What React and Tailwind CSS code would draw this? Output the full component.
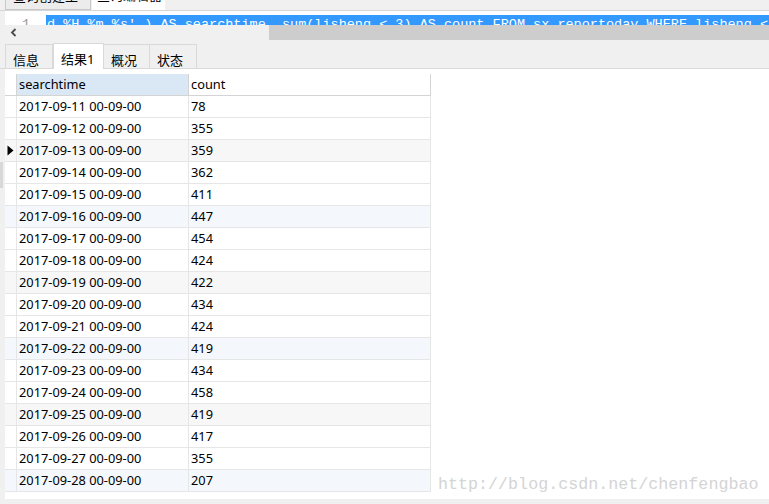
import React from "react";

const rows = [
  ["2017-09-11 00-09-00", "78"],
  ["2017-09-12 00-09-00", "355"],
  ["2017-09-13 00-09-00", "359"],
  ["2017-09-14 00-09-00", "362"],
  ["2017-09-15 00-09-00", "411"],
  ["2017-09-16 00-09-00", "447"],
  ["2017-09-17 00-09-00", "454"],
  ["2017-09-18 00-09-00", "424"],
  ["2017-09-19 00-09-00", "422"],
  ["2017-09-20 00-09-00", "434"],
  ["2017-09-21 00-09-00", "424"],
  ["2017-09-22 00-09-00", "419"],
  ["2017-09-23 00-09-00", "434"],
  ["2017-09-24 00-09-00", "458"],
  ["2017-09-25 00-09-00", "419"],
  ["2017-09-26 00-09-00", "417"],
  ["2017-09-27 00-09-00", "355"],
  ["2017-09-28 00-09-00", "207"],
];

const ui = "font-['Noto_Sans','Noto_Sans_CJK_SC',sans-serif]";

const rowBg = (i) => {
  if (i % 6 === 2) return "bg-[#f7f7f7]";
  if (i % 6 === 5) return "bg-[#f4f8fc]";
  return "bg-white";
};

const Tab = ({ label, active, w }) => (
  <div
    className={
      active
        ? `${w} h-[26px] -mt-[1px] -mb-[1px] bg-white border border-b-0 border-[#d9d9d9] pl-[7px] pt-[2px] relative z-10`
        : `${w} h-[24px] bg-[#f0f0f0] border border-l-0 border-b-0 border-[#d9d9d9] pl-[7px] pt-[2px] first:border-l`
    }
  >
    <span className="text-[13px] leading-[18px] text-black">{label}</span>
  </div>
);

export default function App() {
  return (
    <div className={`w-[769px] h-[504px] bg-[#f0f0f0] overflow-hidden relative flex flex-col ${ui}`}>
      {/* editor tabs (clipped) */}
      <div className="h-[11px] flex items-end border-b border-[#d6d6d6] overflow-hidden">
        <div className="ml-[5px] w-[86px] h-[14px] border border-[#c8c8c8] bg-[#ececec] overflow-hidden">
          <div className="-mt-[10px] pl-[7px] text-[13px] leading-[18px] text-black">查询创建工具</div>
        </div>
        <div className="ml-[1px] w-[73px] h-[14px] bg-white overflow-hidden">
          <div className="-mt-[10px] pl-[5px] text-[13px] leading-[18px] text-black">查询编辑器</div>
        </div>
      </div>

      {/* code line */}
      <div className="h-[14px] ml-[5px] bg-white flex overflow-hidden">
        <div className="w-[41px] pl-[17px] pt-[4px]">
          <div className="h-[10px] overflow-hidden pt-[2px] font-['Liberation_Mono',monospace] text-[13.5px] leading-[16px] text-[#9a9a9a]">1</div>
        </div>
        <div className="flex-1 mt-[4px] h-[10px] bg-[#3399ff] overflow-hidden">
          <div className="pl-[1px] pt-[2px] whitespace-pre font-['Liberation_Mono',monospace] text-[13.5px] leading-[16px] text-white">
            d %H %m %s' ) AS searchtime, sum(lisheng &lt; 3) AS count FROM sx_reportoday WHERE lisheng &lt; 3 GROUP BY
          </div>
        </div>
      </div>

      {/* horizontal scrollbar */}
      <div className="h-[15px] flex">
        <div className="w-[269px] flex items-center pl-[10px]">
          <svg width="7" height="9" viewBox="0 0 7 9">
            <path d="M5.5 1 L2 4.5 L5.5 8" fill="none" stroke="#4a4a4a" strokeWidth="1.8" />
          </svg>
        </div>
        <div className="flex-1 bg-[#cdcdcd]" />
      </div>

      {/* result tabs */}
      <div className="mt-[4px] h-[25px] flex pl-[5px] border-b border-[#d9d9d9]">
        <Tab label="信息" w="w-[48px]" />
        <Tab label="结果1" w="w-[51px]" active />
        <Tab label="概况" w="w-[46px]" />
        <Tab label="状态" w="w-[47px]" />
      </div>

      {/* content */}
      <div className="flex h-[430px]">
        <div className="w-[5px] flex flex-col">
          <div className="h-[93px]" />
          <div className="w-[3px] h-[26px] bg-[#d8d8d8]" />
        </div>
        <div className="flex-1 bg-white pt-[5px]">
          {/* header */}
          <div className="flex w-max h-[22px] text-[12.8px] leading-[21px] text-black">
            <div className="w-[12px] border-r border-b border-[#d4d4d4]" />
            <div className="w-[172px] bg-[#dae8f6] border-r border-b border-[#d4d4d4] pl-[2px]">searchtime</div>
            <div className="w-[242px] border-r border-b border-[#d4d4d4] pl-[2px]">count</div>
          </div>
          {rows.map(([t, c], i) => (
            <div key={t} className={`flex w-max h-[22px] text-[12.8px] leading-[21px] text-black ${rowBg(i)}`}>
              <div className="w-[12px] border-r border-b border-[#e6e6e6] flex items-center pl-[2px]">
                {i === 2 && (
                  <svg width="7" height="11" viewBox="0 0 7 11">
                    <path d="M0.5 0.5 L6.5 5.5 L0.5 10.5 Z" fill="#000" />
                  </svg>
                )}
              </div>
              <div className="w-[172px] border-r border-b border-[#e6e6e6] pl-[2px]">{t}</div>
              <div className="w-[242px] border-r border-b border-[#e6e6e6] pl-[2px]">{c}</div>
            </div>
          ))}
        </div>
      </div>

      <div className="flex-1 bg-[#f0f0f0]" />

      {/* watermark */}
      <div className="absolute left-[438px] top-[476px] font-['Liberation_Mono',monospace] text-[16.7px] leading-[17px] text-[#d4d4d4] whitespace-pre">
        http://blog.csdn.net/chenfengbao
      </div>
    </div>
  );
}
